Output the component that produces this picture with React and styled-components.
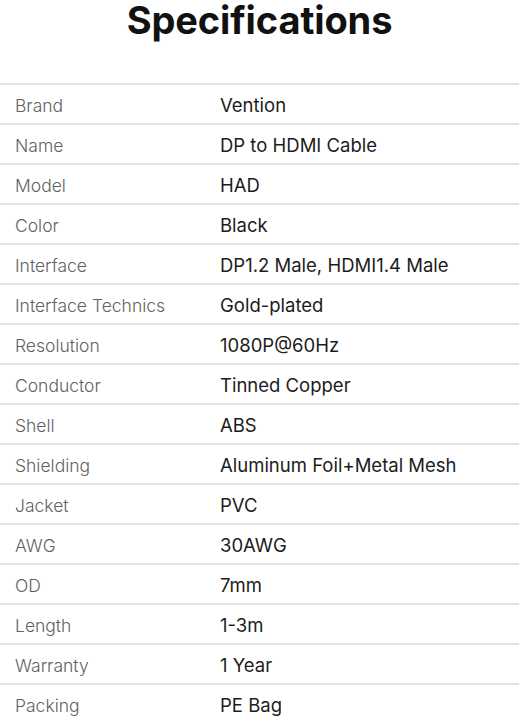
import styled, { createGlobalStyle } from "styled-components";

const GlobalStyle = createGlobalStyle`
	html, body {
		margin: 0;
		padding: 0;
		background: #ffffff;
	}
	body {
		font-family: Inter, "Noto Sans", sans-serif;
	}
`;

const specs = [
	["Brand", "Vention"],
	["Name", "DP to HDMI Cable"],
	["Model", "HAD"],
	["Color", "Black"],
	["Interface", "DP1.2 Male, HDMI1.4 Male"],
	["Interface Technics", "Gold-plated"],
	["Resolution", "1080P@60Hz"],
	["Conductor", "Tinned Copper"],
	["Shell", "ABS"],
	["Shielding", "Aluminum Foil+Metal Mesh"],
	["Jacket", "PVC"],
	["AWG", "30AWG"],
	["OD", "7mm"],
	["Length", "1-3m"],
	["Warranty", "1 Year"],
	["Packing", "PE Bag"],
];

const App = () => {
	return (
		<Page>
			<GlobalStyle />
			<Title>Specifications</Title>
			<Table>
				{specs.map(([label, value]) => (
					<Row key={label}>
						<Label>{label}</Label>
						<Value>{value}</Value>
					</Row>
				))}
			</Table>
		</Page>
	);
};

export default App;

const Page = styled.div`
	width: 519px;
	height: 720px;
	overflow: hidden;
	background: #ffffff;
`;

const Title = styled.h1`
	margin: 0;
	height: 83px;
	box-sizing: border-box;
	text-align: center;
	font-family: Inter, "Noto Sans", sans-serif;
	font-size: 38px;
	font-weight: 700;
	line-height: 40px;
	color: #111111;
	letter-spacing: -0.1px;
`;

const Table = styled.div`
	display: flex;
	flex-direction: column;
`;

const Row = styled.div`
	display: grid;
	grid-template-columns: 205px 1fr;
	align-items: center;
	height: 40px;
	box-sizing: border-box;
	padding: 2px 0 0 15px;
	border-top: 2px solid #e2e2e2;
`;

const Label = styled.span`
	font-size: 17.5px;
	font-weight: 300;
	color: #626262;
`;

const Value = styled.span`
	font-size: 18.5px;
	font-weight: 400;
	color: #1c1c1c;
`;
